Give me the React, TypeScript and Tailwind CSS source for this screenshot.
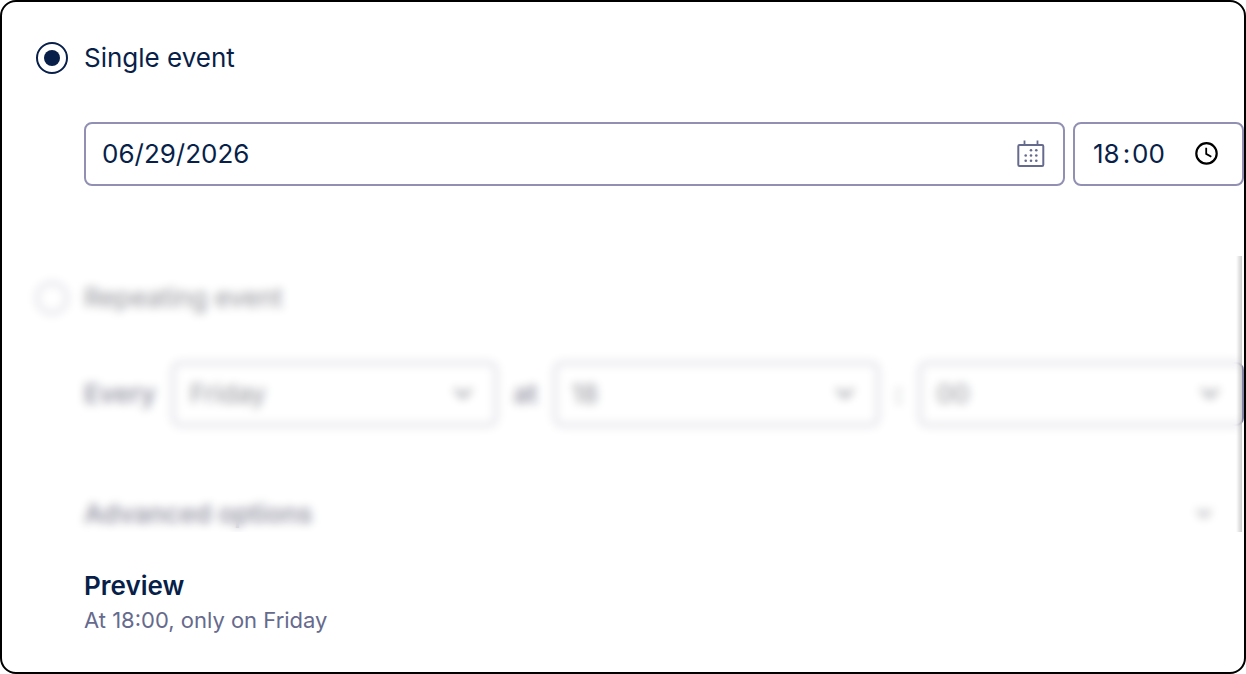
import { useState, type ReactNode } from "react";

const days = ["Monday", "Tuesday", "Wednesday", "Thursday", "Friday", "Saturday", "Sunday"];
const hours = Array.from({ length: 24 }, (_, i) => String(i).padStart(2, "0"));
const minutes = Array.from({ length: 60 }, (_, i) => String(i).padStart(2, "0"));

function CalendarIcon() {
  return (
    <svg width="28" height="28" viewBox="0 0 28 28" fill="none" stroke="#666a8d" strokeWidth="2" aria-hidden="true">
      <rect x="1.3" y="5" width="25" height="21" rx="1.2" />
      <path d="M7.5 0.5V5M20.5 0.5V5" strokeWidth="1.8" />
      <g fill="#666a8d" stroke="none">
        <circle cx="14" cy="10.2" r="1.3" />
        <circle cx="19.3" cy="10.2" r="1.3" />
        <circle cx="8.7" cy="15.5" r="1.3" />
        <circle cx="14" cy="15.5" r="1.3" />
        <circle cx="19.3" cy="15.5" r="1.3" />
        <circle cx="8.7" cy="20.8" r="1.3" />
        <circle cx="14" cy="20.8" r="1.3" />
        <circle cx="19.3" cy="20.8" r="1.3" />
      </g>
    </svg>
  );
}

function ClockIcon() {
  return (
    <svg width="24" height="24" viewBox="0 0 24 24" fill="none" stroke="#000" strokeWidth="2.2" aria-hidden="true">
      <circle cx="12.5" cy="11.4" r="10.2" />
      <path d="M12.2 5.8V11.9L17.3 14.8" strokeWidth="1.8" />
    </svg>
  );
}

function Chevron({ size = 20 }: { size?: number }) {
  return (
    <svg width={size} height={size} viewBox="0 0 20 20" fill="none" stroke="#1c2030" strokeWidth="3" aria-hidden="true">
      <path d="M2 5l8 8 8-8" />
    </svg>
  );
}

function Radio({ checked, onChange, children }: { checked: boolean; onChange: () => void; children: ReactNode }) {
  return (
    <label className="flex h-8 items-center gap-4">
      <span className="grid size-8 place-items-center">
        <input
          type="radio"
          name="schedule"
          checked={checked}
          onChange={onChange}
          className="peer col-start-1 row-start-1 size-8 appearance-none rounded-full border-2 border-[#8585a8] bg-white checked:border-[#081f49]"
        />
        <span className="pointer-events-none col-start-1 row-start-1 hidden size-4 rounded-full bg-[#081f49] peer-checked:block" />
      </span>
      {children}
    </label>
  );
}

function Select({ label, options, initial }: { label: string; options: string[]; initial: string }) {
  return (
    <div className="grid flex-1 items-center">
      <select
        aria-label={label}
        defaultValue={initial}
        className="col-start-1 row-start-1 h-16 w-full appearance-none rounded-lg border-2 border-[#8585a8] bg-white px-4"
      >
        {options.map((option) => (
          <option key={option}>{option}</option>
        ))}
      </select>
      <span className="pointer-events-none col-start-1 row-start-1 mr-6 justify-self-end">
        <Chevron />
      </span>
    </div>
  );
}

export default function App() {
  const [mode, setMode] = useState("single");
  const [date, setDate] = useState("06/29/2026");
  const [hour, setHour] = useState("18");
  const [minute, setMinute] = useState("00");

  return (
    <main className="overflow-hidden rounded-2xl border-2 border-black bg-white pt-10 pb-[38px] font-['Inter',sans-serif] text-[26px] leading-8 text-[#081f49]">
      <section className="pl-[34px]">
        <Radio checked={mode === "single"} onChange={() => setMode("single")}>
          Single event
        </Radio>
        <div className="mt-12 flex gap-2 pl-12">
          <div className="flex h-16 min-w-0 flex-1 items-center rounded-lg border-2 border-[#9190b3] px-4">
            <input
              aria-label="Date"
              value={date}
              onChange={(e) => setDate(e.target.value)}
              className="min-w-0 flex-1 outline-none"
            />
            <button type="button" aria-label="Open calendar" className="mr-0.5">
              <CalendarIcon />
            </button>
          </div>
          <div className="flex h-16 w-[171px] items-center rounded-lg border-2 border-[#9190b3] pr-6 pl-[18px]">
            <input
              aria-label="Hours"
              value={hour}
              onChange={(e) => setHour(e.target.value)}
              className="w-7 outline-none"
            />
            <span className="w-[11px] text-center">:</span>
            <input
              aria-label="Minutes"
              value={minute}
              onChange={(e) => setMinute(e.target.value)}
              className="w-9 outline-none"
            />
            <button type="button" aria-label="Open clock" className="ml-auto">
              <ClockIcon />
            </button>
          </div>
        </div>
      </section>

      <section className="relative mt-[70px] pt-[26px] pl-[34px] text-[#1c2030]">
        <Radio checked={mode === "repeat"} onChange={() => setMode("repeat")}>
          Repeating event
        </Radio>
        <div className="mt-12 flex items-center gap-4 pl-12">
          <span className="font-semibold text-[#2c2c4c]">Every</span>
          <Select label="Day" options={days} initial="Friday" />
          <span className="font-semibold text-[#2c2c4c]">at</span>
          <Select label="Hour" options={hours} initial="18" />
          <span>:</span>
          <Select label="Minute" options={minutes} initial="00" />
        </div>
        <button
          type="button"
          className="mt-[72px] flex w-full items-center justify-between pr-8 pb-0.5 pl-12 font-semibold text-[#2c2c4c]"
        >
          Advanced options
          <Chevron size={16} />
        </button>
        <div className="absolute inset-y-0 right-0.5 left-0 bg-white/50 backdrop-blur-[5px]">
          <div className="ml-auto h-full w-1.5 bg-linear-to-r from-transparent to-black/20" />
        </div>
      </section>

      <section className="mt-[38px] pl-[82px]">
        <h2 className="font-semibold">Preview</h2>
        <p className="mt-1 text-[22px] leading-7 text-[#666a8d]">At 18:00, only on Friday</p>
      </section>
    </main>
  );
}
